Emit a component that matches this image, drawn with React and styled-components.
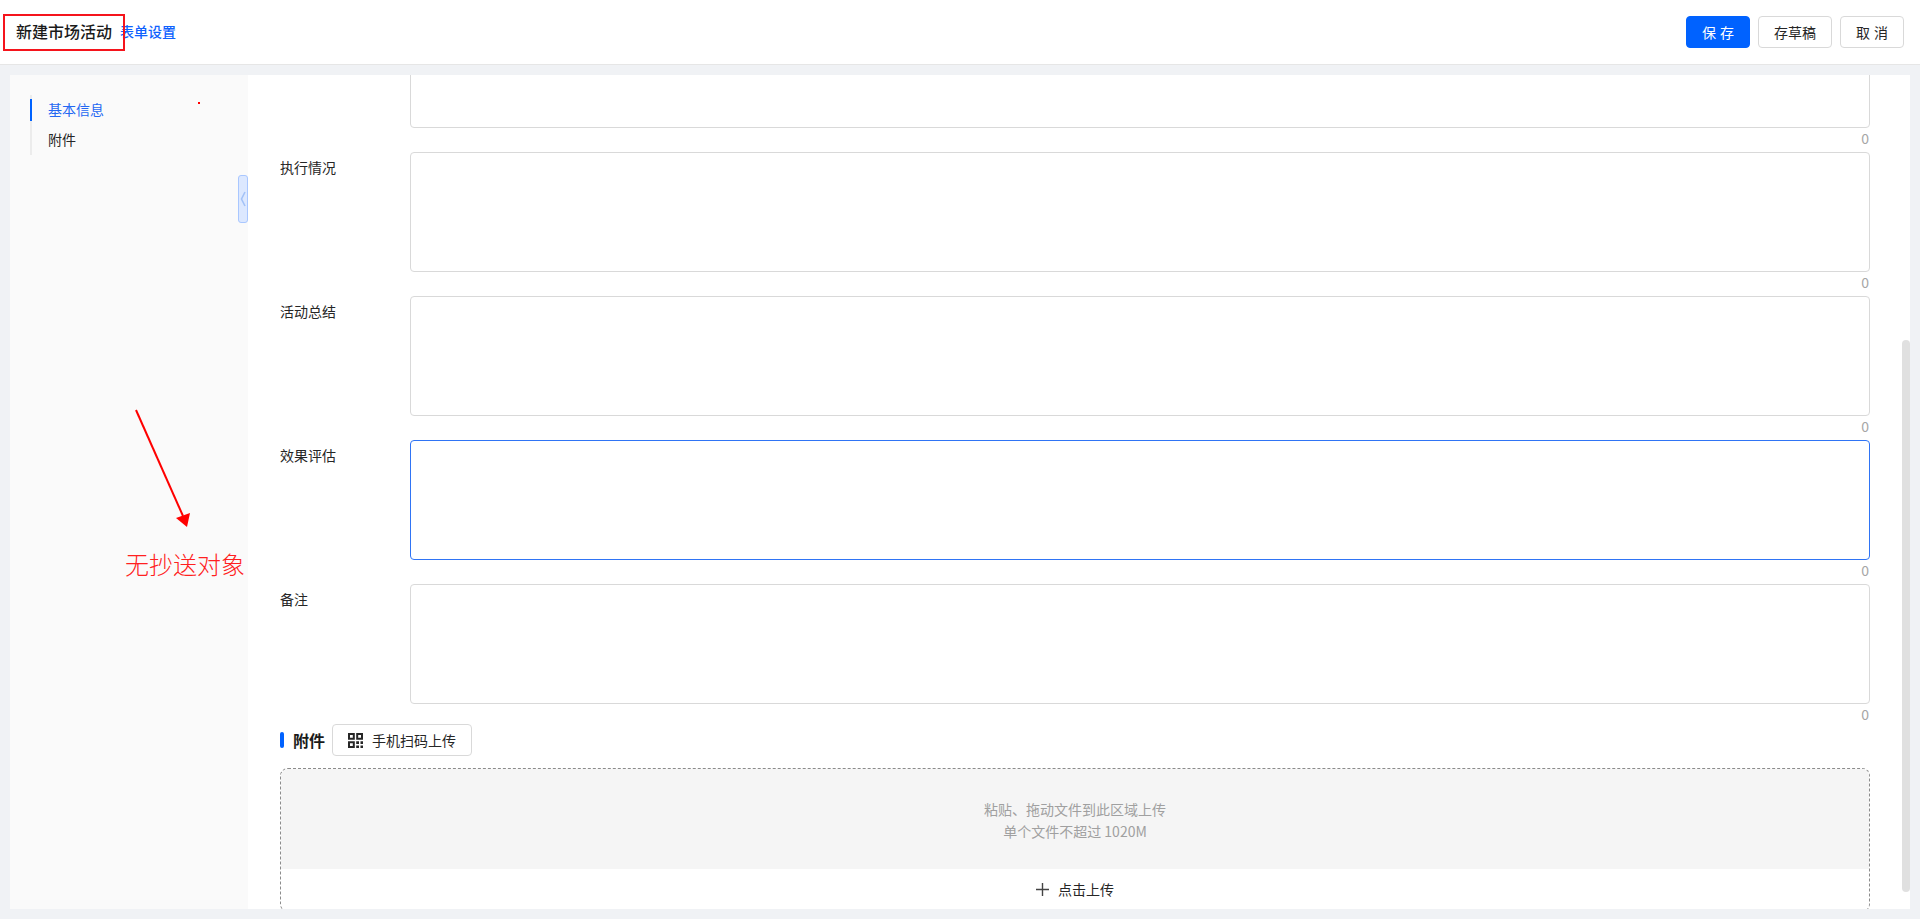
import React, { useLayoutEffect, useRef } from "react";
import styled, { createGlobalStyle } from "styled-components";

const Global = createGlobalStyle`
  html, body { margin: 0; padding: 0; height: 100%; overflow: hidden; }
  body { background: #f0f2f5; font-family: "Noto Sans CJK SC", "Noto Sans", sans-serif; font-size: 14px; color: #1f1f1f; }
  * { box-sizing: border-box; }
`;

const Page = styled.div`
  position: relative;
  width: 1920px;
  height: 919px;
  display: flex;
  flex-direction: column;
`;

const Header = styled.header`
  height: 65px;
  flex: none;
  display: flex;
  align-items: center;
  justify-content: space-between;
  padding: 0 16px;
  background: #fff;
  border-bottom: 1px solid #e6e6e6;
`;

const TitleGroup = styled.div`
  display: flex;
  align-items: center;
  gap: 8px;
  padding-bottom: 2px;
`;

const Title = styled.h1`
  margin: 0;
  font-size: 16px;
  line-height: 24px;
  font-weight: 500;
  color: #1a1a1a;
`;

const SettingsLink = styled.a`
  font-size: 14px;
  font-weight: 500;
  color: #0f62fe;
`;

const Actions = styled.div`
  display: flex;
  gap: 8px;
`;

const Button = styled.button`
  height: 32px;
  width: ${(p) => p.$width}px;
  padding: 0 0 1px;
  border-radius: 4px;
  font: inherit;
  font-size: 14px;
  word-spacing: 1px;
  border: 1px solid ${(p) => (p.$primary ? "#0062ff" : "#d9d9d9")};
  background: ${(p) => (p.$primary ? "#0062ff" : "#fff")};
  color: ${(p) => (p.$primary ? "#fff" : "#262626")};
`;

const Body = styled.div`
  flex: 1;
  min-height: 0;
  display: flex;
  padding: 10px;
`;

const Sidebar = styled.aside`
  position: relative;
  width: 238px;
  flex: none;
  padding: 20px;
  background: #fafafa;
`;

const Nav = styled.nav`
  display: flex;
  flex-direction: column;
  border-left: 2px solid #ececec;
  width: 180px;
`;

const NavItem = styled.a`
  position: relative;
  height: 30px;
  line-height: 28px;
  padding-left: 16px;
  font-size: 14px;
  color: ${(p) => (p.$active ? "#2468f2" : "#262626")};
  &::before {
    content: "";
    display: ${(p) => (p.$active ? "block" : "none")};
    position: absolute;
    left: -2px;
    top: 4px;
    width: 2px;
    height: 22px;
    background: #0062ff;
  }
`;

const Handle = styled.button`
  position: absolute;
  right: 0;
  top: 100px;
  width: 10px;
  height: 48px;
  padding: 0;
  display: flex;
  align-items: center;
  justify-content: center;
  background: #dce8ff;
  border: 1px solid #a9c7ff;
  border-radius: 3px;
`;

const MainWrap = styled.div`
  position: relative;
  flex: 1;
  min-width: 0;
  height: 834px;
`;

const Main = styled.main`
  height: 100%;
  overflow-y: scroll;
  scrollbar-width: none;
  background: #fff;
  padding: 0 40px 23px 32px;
  &::-webkit-scrollbar { display: none; }
`;

const Thumb = styled.div`
  position: absolute;
  right: 0;
  top: 265px;
  width: 8px;
  height: 552px;
  border-radius: 4px;
  background: #e0e0e0;
`;

const HiddenAbove = styled.div`
  height: 333px;
`;

const FieldRow = styled.div`
  display: flex;
  height: 144px;
`;

const Label = styled.label`
  width: 130px;
  flex: none;
  font-size: 14px;
  line-height: 22px;
  padding-top: 4px;
  color: #262626;
`;

const FieldBody = styled.div`
  flex: 1;
  display: flex;
  flex-direction: column;
`;

const Area = styled.textarea`
  display: block;
  width: 100%;
  height: 120px;
  flex: none;
  resize: none;
  outline: none;
  border-radius: 4px;
  background: #fff;
  border: 1px solid ${(p) => (p.$focused ? "#2f74f5" : "#d9d9d9")};
`;

const Counter = styled.div`
  text-align: right;
  padding-right: 1px;
  font-size: 14px;
  line-height: 20px;
  height: 24px;
  color: #a6a6a6;
`;

const SectionHead = styled.div`
  display: flex;
  align-items: center;
  height: 32px;
  margin-top: -4px;
`;

const SectionMark = styled.span`
  width: 4px;
  height: 16px;
  border-radius: 2px;
  background: #0062ff;
  margin-right: 9px;
`;

const SectionTitle = styled.h2`
  margin: 0 7px 0 0;
  font-size: 16px;
  font-weight: 700;
  line-height: 22px;
  color: #1a1a1a;
`;

const ScanButton = styled.button`
  width: 140px;
  height: 32px;
  display: flex;
  align-items: center;
  justify-content: center;
  gap: 9px;
  padding: 0;
  font: inherit;
  font-size: 14px;
  line-height: 20px;
  color: #262626;
  background: #fff;
  border: 1px solid #d9d9d9;
  border-radius: 4px;
`;

const Drop = styled.div`
  margin-top: 12px;
  height: 144px;
  border: 1px dashed #8c8c8c;
  border-radius: 8px;
  overflow: hidden;
  display: flex;
  flex-direction: column;
`;

const DropHint = styled.div`
  height: 100px;
  flex: none;
  background: #f5f5f5;
  display: flex;
  flex-direction: column;
  align-items: center;
  justify-content: center;
  padding-top: 2px;
  font-size: 14px;
  line-height: 22px;
  color: #a0a0a0;
`;

const DropAction = styled.div`
  height: 40px;
  display: flex;
  align-items: center;
  justify-content: center;
  gap: 9px;
  font-size: 14px;
  line-height: 20px;
  color: #262626;
`;

const TitleBox = styled.div`
  position: absolute;
  left: 3px;
  top: 14px;
  width: 122px;
  height: 37px;
  border: 2px solid #f5141c;
  pointer-events: none;
`;

const RedDot = styled.span`
  position: absolute;
  left: 198px;
  top: 102px;
  width: 2px;
  height: 2px;
  background: #f00;
`;

const ArrowSvg = styled.svg`
  position: absolute;
  left: 130px;
  top: 405px;
`;

const RedNote = styled.div`
  position: absolute;
  left: 125px;
  top: 547px;
  font-size: 24px;
  line-height: 34px;
  font-weight: 300;
  color: #ff2020;
  white-space: nowrap;
`;

const fields = [
  { label: "" },
  { label: "执行情况" },
  { label: "活动总结" },
  { label: "效果评估", focused: true },
  { label: "备注" },
];

const QrIcon = () => (
  <svg width="15" height="15" viewBox="0 0 15 15" fill="#262626">
    <path fillRule="evenodd" d="M0 0h6.8v6.8H0zM2 2v2.8h2.8V2zM8.2 0H15v6.8H8.2zM10.2 2v2.8H13V2zM0 8.2h6.8V15H0zM2 10.2V13h2.8v-2.8z" />
    <path d="M8.2 8.2H11V11H8.2zM12.5 8.2H15V11h-2.5zM8.2 12.5H11V15H8.2zM12.5 12.5H15V15h-2.5z" />
  </svg>
);

export default function App() {
  const scroller = useRef(null);
  useLayoutEffect(() => {
    if (scroller.current) scroller.current.scrollTop = 400;
  }, []);
  return (
    <Page>
      <Global />
      <Header>
        <TitleGroup>
          <Title>新建市场活动</Title>
          <SettingsLink>表单设置</SettingsLink>
        </TitleGroup>
        <Actions>
          <Button $primary $width={64}>保 存</Button>
          <Button $width={74}>存草稿</Button>
          <Button $width={64}>取 消</Button>
        </Actions>
      </Header>
      <Body>
        <Sidebar>
          <Nav>
            <NavItem $active>基本信息</NavItem>
            <NavItem>附件</NavItem>
          </Nav>
          <Handle aria-label="收起">
            <svg width="6" height="16" viewBox="0 0 6 16" fill="none">
              <path d="M5 1 1.5 8 5 15" stroke="#a3c2f7" strokeWidth="1.6" />
            </svg>
          </Handle>
        </Sidebar>
        <MainWrap>
          <Main ref={scroller}>
            <HiddenAbove />
            {fields.map((f, i) => (
              <FieldRow key={i}>
                <Label>{f.label}</Label>
                <FieldBody>
                  <Area $focused={f.focused} readOnly />
                  <Counter>0</Counter>
                </FieldBody>
              </FieldRow>
            ))}
            <SectionHead>
              <SectionMark />
              <SectionTitle>附件</SectionTitle>
              <ScanButton><QrIcon />手机扫码上传</ScanButton>
            </SectionHead>
            <Drop>
              <DropHint>
                <span>粘贴、拖动文件到此区域上传</span>
                <span>单个文件不超过 1020M</span>
              </DropHint>
              <DropAction>
                <svg width="13" height="13" viewBox="0 0 13 13" stroke="#444" strokeWidth="1.4">
                  <path d="M6.5 0v13M0 6.5h13" />
                </svg>
                点击上传
              </DropAction>
            </Drop>
          </Main>
          <Thumb />
        </MainWrap>
      </Body>
      <TitleBox />
      <RedDot />
      <ArrowSvg width="70" height="130" viewBox="0 0 70 130">
        <path d="M6 5 53 111" stroke="#f00" strokeWidth="2" />
        <path d="M46 113 60 108 57 122 Z" fill="#f00" />
      </ArrowSvg>
      <RedNote>无抄送对象</RedNote>
    </Page>
  );
}
